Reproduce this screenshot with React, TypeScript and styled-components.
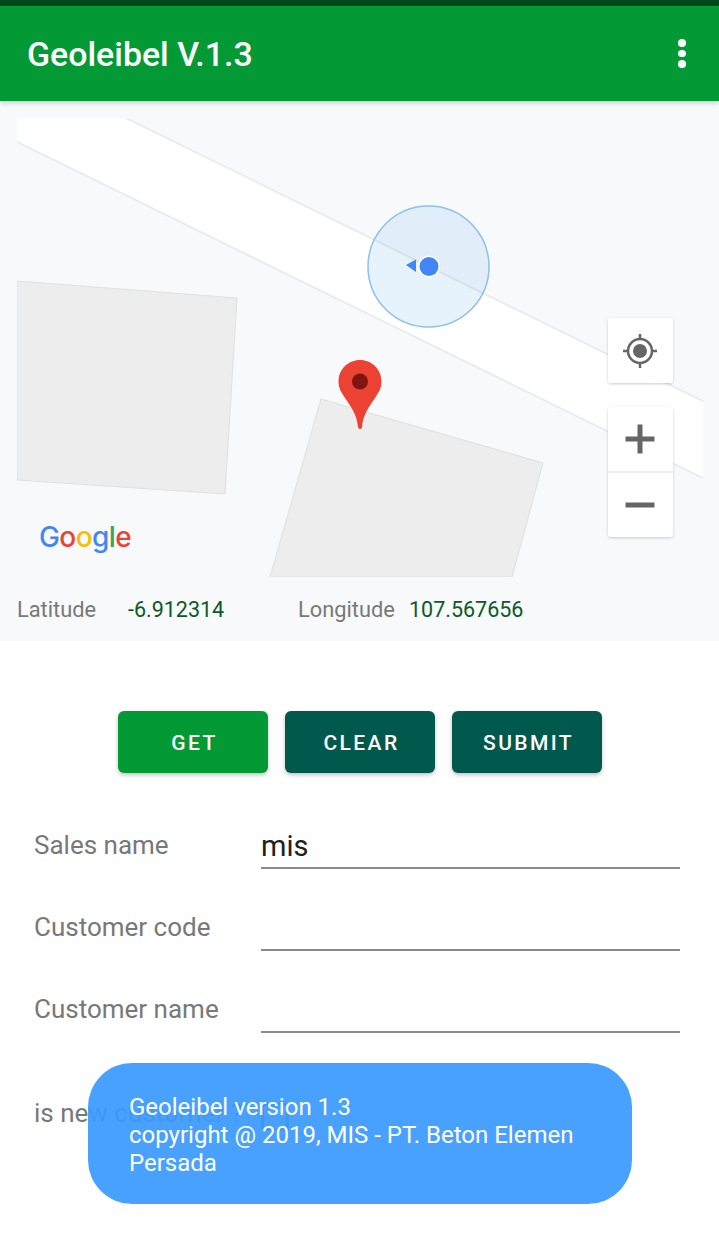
import React from 'react';
import styled, { createGlobalStyle } from 'styled-components';

const GlobalStyle = createGlobalStyle`
  html, body {
    margin: 0;
    padding: 0;
    background: #fff;
  }
  * {
    box-sizing: border-box;
  }
`;

const Screen = styled.div`
  position: relative;
  width: 719px;
  height: 1244px;
  overflow: hidden;
  background: #fff;
  font-family: Roboto, 'Liberation Sans', sans-serif;
`;

const StatusBar = styled.div`
  height: 6px;
  background: #00491a;
`;

const Toolbar = styled.header`
  position: relative;
  z-index: 2;
  height: 95px;
  padding: 0 27px;
  display: flex;
  align-items: center;
  justify-content: space-between;
  background: #039a36;
  box-shadow: 0 2px 5px rgba(0, 0, 0, 0.18);
`;

const Title = styled.h1`
  margin: 2px 0 0;
  color: #fff;
  font-size: 33.9px;
  font-weight: 500;
`;

const OverflowIcon = styled.div`
  display: flex;
  flex-direction: column;
  gap: 3px;
  margin-right: 6px;
  span {
    width: 8px;
    height: 7.5px;
    border-radius: 50%;
    background: #fff;
  }
`;

const MapPanel = styled.section`
  height: 540px;
  padding: 17px 16px 0 17px;
  background: #f8f9fb;
`;

const MapCanvas = styled.div`
  position: relative;
  width: 686px;
  height: 459px;
  overflow: hidden;
  background: #f8f9fb;
  svg {
    display: block;
  }
`;

const MapControl = styled.div<{ $top: number; $height: number }>`
  position: absolute;
  left: 591px;
  top: ${(p) => p.$top}px;
  width: 65px;
  height: ${(p) => p.$height}px;
  display: flex;
  flex-direction: column;
  background: rgba(255, 255, 255, 0.88);
  border-radius: 3px;
  box-shadow: 0 1px 3px rgba(0, 0, 0, 0.2);
`;

const ControlCell = styled.div<{ $divided?: boolean }>`
  flex: 1;
  display: flex;
  align-items: center;
  justify-content: center;
  padding-right: 2px;
  border-top: ${(p) => (p.$divided ? '2px solid #eeeeee' : 'none')};
`;

const GoogleLogo = styled.div`
  position: absolute;
  left: 22px;
  top: 399px;
  font-family: Inter, sans-serif;
  font-size: 28px;
  font-weight: 500;
  letter-spacing: -0.6px;
  line-height: 40px;
  text-shadow: 0 0 2px #fff;
`;

const Letter = styled.span<{ $color: string }>`
  color: ${(p) => p.$color};
`;

const CoordRow = styled.div`
  display: flex;
  align-items: center;
  height: 64px;
  padding-top: 1px;
  font-size: 21.8px;
`;

const CoordLabel = styled.span<{ $width: number }>`
  width: ${(p) => p.$width}px;
  color: #787878;
`;

const CoordValue = styled.span<{ $width: number }>`
  width: ${(p) => p.$width}px;
  color: #0b5a28;
  font-size: 21.5px;
`;

const Actions = styled.div`
  display: flex;
  justify-content: center;
  gap: 17px;
  margin-top: 70px;
  padding-left: 1px;
`;

const ActionButton = styled.button<{ $primary?: boolean }>`
  width: 150px;
  height: 62px;
  padding: 2px 0 0 3px;
  border: 0;
  border-radius: 6px;
  background: ${(p) => (p.$primary ? '#039a36' : '#01594d')};
  color: #fff;
  font-family: Roboto, sans-serif;
  font-size: 21px;
  font-weight: 500;
  letter-spacing: 2.4px;
  box-shadow: 0 2px 4px rgba(0, 0, 0, 0.25);
`;

const Form = styled.form`
  margin-top: 32px;
  padding: 0 39px 0 34px;
`;

const FieldRow = styled.div<{ $check?: boolean }>`
  display: flex;
  align-items: ${(p) => (p.$check ? 'center' : 'flex-end')};
  height: 82px;
  margin-top: ${(p) => (p.$check ? '43px' : '0')};
  &:first-child {
    height: 64px;
  }
`;

const FieldLabel = styled.label`
  width: 227px;
  padding-bottom: 8px;
  color: #787878;
  font-size: 26px;
  line-height: 32px;
  white-space: nowrap;
`;

const FieldValue = styled.div`
  flex: 1;
  height: 45px;
  border-bottom: 2px solid #8a8a8a;
  color: #212121;
  font-size: 29px;
  line-height: 44px;
`;

const CheckBox = styled.span`
  width: 28px;
  height: 28px;
  border: 3px solid #757575;
  border-radius: 4px;
`;

const Toast = styled.div`
  position: absolute;
  left: 88px;
  top: 1063px;
  width: 544px;
  height: 141px;
  padding: 30px 40px 0 41px;
  border-radius: 44px;
  background: rgba(58, 154, 255, 0.93);
  color: #fff;
  font-size: 24px;
  line-height: 28px;
`;

const LOGO: [string, string][] = [
  ['G', '#4285f4'],
  ['o', '#ea4335'],
  ['o', '#fbbc05'],
  ['g', '#4285f4'],
  ['l', '#34a853'],
  ['e', '#ea4335'],
];

function MapDrawing() {
  return (
    <svg width="686" height="459" viewBox="17 118 686 459">
      <polygon points="17,281 237,298 225,494 17,480" fill="#ededed" stroke="#e0e0e0" />
      <polygon points="321,399 543,463 512,577 270,577" fill="#ededed" stroke="#dedede" />
      <polygon points="126,118 703,401 703,478 17,142 17,118" fill="#fff" />
      <line x1="126" y1="118" x2="703" y2="401" stroke="#ececec" strokeWidth="2" />
      <line x1="17" y1="142" x2="703" y2="478" stroke="#ececec" strokeWidth="2" />
      <circle cx="428.5" cy="266.5" r="60.5" fill="#42a0e6" fillOpacity="0.13" stroke="#8fc0ea" strokeWidth="1.5" />
      <polygon points="406,265 416,259.5 416,272" fill="#4285f4" />
      <circle cx="429" cy="266.5" r="11" fill="#fff" />
      <circle cx="429" cy="266.5" r="9.5" fill="#4285f4" />
      <path
        d="M360 360c-12 0-21.5 9.500-21.500 21.500 0 6.500 2.500 10.500 6.500 16.500 6 8.500 12 17 13 29 .2 2.500 3.800 2.500 4 0 1-12 7-20.500 13-29 4-6 6.500-10 6.500-16.500C381.500 369.500 372 360 360 360z"
        fill="#ec4233"
      />
      <circle cx="360" cy="381.500" r="8" fill="#7f1510" />
    </svg>
  );
}

export default function App() {
  return (
    <Screen>
      <GlobalStyle />
      <StatusBar />
      <Toolbar>
        <Title>Geoleibel V.1.3</Title>
        <OverflowIcon>
          <span />
          <span />
          <span />
        </OverflowIcon>
      </Toolbar>
      <MapPanel>
        <MapCanvas>
          <MapDrawing />
          <MapControl $top={200} $height={65}>
            <ControlCell>
              <svg width="36" height="36" viewBox="0 0 36 36" fill="none" stroke="#666" strokeWidth="2.500">
                <circle cx="18" cy="18" r="12" />
                <circle cx="18" cy="18" r="7" fill="#666" stroke="none" />
                <path d="M18 1v5M18 30v5M1 18h5M30 18h5" />
              </svg>
            </ControlCell>
          </MapControl>
          <MapControl $top={289} $height={130}>
            <ControlCell>
              <svg width="30" height="30" viewBox="0 0 30 30" fill="#666">
                <rect x="0.500" y="12.500" width="29" height="5" />
                <rect x="12.500" y="0.500" width="5" height="29" />
              </svg>
            </ControlCell>
            <ControlCell $divided>
              <svg width="30" height="6" viewBox="0 0 30 6" fill="#666">
                <rect x="0.500" y="0.500" width="29" height="5" />
              </svg>
            </ControlCell>
          </MapControl>
          <GoogleLogo>
            {LOGO.map(([ch, color], i) => (
              <Letter key={i} $color={color}>
                {ch}
              </Letter>
            ))}
          </GoogleLogo>
        </MapCanvas>
        <CoordRow>
          <CoordLabel $width={111}>Latitude</CoordLabel>
          <CoordValue $width={170}>-6.912314</CoordValue>
          <CoordLabel $width={111}>Longitude</CoordLabel>
          <CoordValue $width={130}>107.567656</CoordValue>
        </CoordRow>
      </MapPanel>
      <Actions>
        <ActionButton type="button" $primary>
          GET
        </ActionButton>
        <ActionButton type="button">CLEAR</ActionButton>
        <ActionButton type="button">SUBMIT</ActionButton>
      </Actions>
      <Form>
        <FieldRow>
          <FieldLabel>Sales name</FieldLabel>
          <FieldValue>mis</FieldValue>
        </FieldRow>
        <FieldRow>
          <FieldLabel>Customer code</FieldLabel>
          <FieldValue />
        </FieldRow>
        <FieldRow>
          <FieldLabel>Customer name</FieldLabel>
          <FieldValue />
        </FieldRow>
        <FieldRow $check>
          <FieldLabel>is new customer ?</FieldLabel>
          <CheckBox />
        </FieldRow>
      </Form>
      <Toast>
        Geoleibel version 1.3
        <br />
        copyright @ 2019, MIS - PT. Beton Elemen Persada
      </Toast>
    </Screen>
  );
}
